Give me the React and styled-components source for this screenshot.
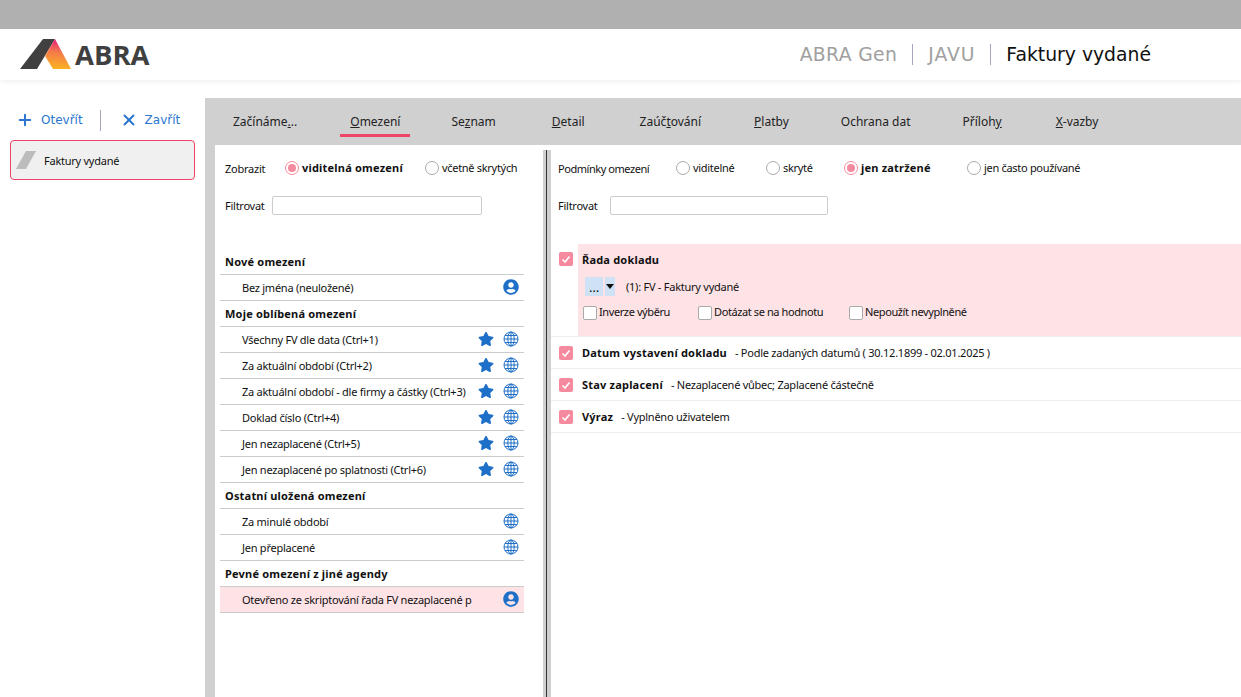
import React from "react";
import styled, { createGlobalStyle } from "styled-components";
import { FaStar, FaUserCircle } from "react-icons/fa";
import { FiPlus, FiX } from "react-icons/fi";

const Global = createGlobalStyle`
  html, body { margin: 0; padding: 0; background: #fff; }
  body { font-family: "Noto Sans", Tahoma, sans-serif; font-size: 11px; letter-spacing: -0.25px; color: #111; overflow: hidden; }
  * { box-sizing: border-box; }
  b { letter-spacing: 0.2px; }
`;

const Page = styled.div`
  width: 1241px;
  height: 697px;
  display: flex;
  flex-direction: column;
  overflow: hidden;
`;

const TopBar = styled.div`
  height: 29px;
  background: #b0b0b0;
`;

const Header = styled.header`
  height: 51px;
  display: flex;
  align-items: center;
  justify-content: space-between;
  padding: 0 90px 0 20px;
  box-shadow: 0 2px 4px rgba(0, 0, 0, 0.06);
`;

const Logo = styled.div`
  display: flex;
  align-items: center;
  gap: 3px;
`;

const LogoText = styled.span`
  font-family: "Open Sans", sans-serif;
  font-weight: 700;
  font-size: 27.5px;
  letter-spacing: 0;
  color: #404040;
`;

const Crumbs = styled.div`
  display: flex;
  align-items: center;
  font-family: "DejaVu Sans", sans-serif;
  font-size: 18.8px;
  letter-spacing: 0;
`;

const Crumb = styled.span`
  color: ${(p) => (p.$active ? "#111" : "#a0a0a0")};
  letter-spacing: ${(p) => p.$track ?? 0}px;
  padding: 0 ${(p) => (p.$active ? 0 : 15)}px 0 ${(p) => (p.$first ? 0 : 15)}px;
  line-height: 21px;
  border-left: ${(p) => (p.$first ? "none" : "1px solid #a5a5c0")};
`;

const Body = styled.div`
  flex: 1;
  display: flex;
  padding-top: 18px;
  min-height: 0;
`;

const Sidebar = styled.aside`
  width: 205px;
  padding: 0 10px;
`;

const SideActions = styled.div`
  height: 42px;
  display: flex;
  align-items: center;
  padding: 2px 0 0 6px;
  font-family: "DejaVu Sans", sans-serif;
  font-size: 12px;
  letter-spacing: 0;
  color: #2a75cf;
`;

const SideAction = styled.span`
  display: flex;
  align-items: center;
  gap: 7px;
  svg { font-size: 18px; stroke-width: 2.6; }
`;

const SideDivider = styled.span`
  width: 1px;
  height: 21px;
  background: #a5a5c0;
  margin: 0 19px 0 17px;
`;

const OpenCard = styled.div`
  width: 185px;
  height: 40px;
  background: #f0f0f0;
  border: 1px solid #ee4466;
  border-radius: 4px;
  display: flex;
  align-items: center;
  gap: 8px;
  padding-left: 5px;
`;

const Main = styled.main`
  flex: 1;
  display: flex;
  flex-direction: column;
  background: #d0d0d0;
  min-width: 0;
`;

const Tabs = styled.nav`
  height: 47px;
  display: flex;
  padding-left: 18px;
`;

const Tab = styled.span`
  height: 39px;
  display: flex;
  align-items: center;
  padding: 11px 10px 0;
  margin-left: ${(p) => p.$gap}px;
  font-size: 12px;
  letter-spacing: 0;
  color: #222;
  border-bottom: 3px solid ${(p) => (p.$active ? "#ee4466" : "transparent")};
  white-space: pre;
`;

const Panes = styled.div`
  flex: 1;
  display: flex;
  margin-left: 10px;
  background: #fff;
  min-height: 0;
`;

const LeftPane = styled.section`
  width: 328px;
  padding: 0 19px 0 5px;
`;

const Splitter = styled.div`
  width: 8px;
  margin-top: 5px;
  background: #d0d0d0;
  display: flex;
  justify-content: center;
  &::before {
    content: "";
    width: 1px;
    margin-left: -2px;
    background: #333;
  }
`;

const RightPane = styled.section`
  flex: 1;
  min-width: 0;
`;

const OptionRow = styled.div`
  height: 46px;
  display: flex;
  align-items: center;
  padding: 0 0 0 ${(p) => p.$pad}px;
`;

const FieldLabel = styled.span`
  width: ${(p) => p.$w}px;
  flex: none;
  letter-spacing: ${(p) => p.$track ?? -0.25}px;
`;

const RadioLabel = styled.label`
  display: flex;
  align-items: center;
  gap: 3px;
  width: ${(p) => p.$w}px;
  flex: none;
  font-weight: ${(p) => (p.$on ? 700 : 400)};
  letter-spacing: ${(p) => (p.$on ? 0.2 : -0.3)}px;
  white-space: nowrap;
`;

const RadioDot = styled.span`
  width: 14px;
  height: 14px;
  flex: none;
  border-radius: 50%;
  border: 1px solid ${(p) => (p.$on ? "#f58a9f" : "#aaa")};
  display: flex;
  align-items: center;
  justify-content: center;
  &::after {
    content: "";
    width: 8px;
    height: 8px;
    border-radius: 50%;
    background: ${(p) => (p.$on ? "#f58a9f" : "transparent")};
  }
`;

const RaisedText = styled.span`
  margin-bottom: 2px;
`;

const FilterRow = styled.div`
  height: 27px;
  margin-top: 1px;
  display: flex;
  align-items: center;
  padding-left: ${(p) => p.$pad}px;
`;

const FilterInput = styled.div`
  width: ${(p) => p.$w}px;
  height: 19px;
  border: 1px solid #ccc;
  border-radius: 2px;
`;

const List = styled.div`
  margin-top: 30px;
`;

const GroupTitle = styled.div`
  height: 26px;
  display: flex;
  align-items: center;
  padding-left: 5px;
  font-weight: 700;
  letter-spacing: 0.2px;
  border-bottom: 1px solid #ccc;
`;

const ListRow = styled.div`
  height: 26px;
  display: flex;
  align-items: center;
  padding: 0 5px 0 22px;
  border-bottom: 1px solid #ccc;
  background: ${(p) => (p.$hot ? "#fde2e6" : "transparent")};
`;

const RowText = styled.span`
  flex: 1;
  white-space: nowrap;
`;

const IconSlot = styled.span`
  width: 16px;
  height: 16px;
  margin: 0 0 2px 9px;
  display: flex;
  align-items: center;
  justify-content: center;
  color: #1e6fc8;
  font-size: 16px;
`;

const Conditions = styled.div`
  margin-top: 25px;
`;

const Condition = styled.div`
  display: flex;
  padding-left: 8px;
  border-bottom: 1px solid #eee;
  min-height: 32px;
  align-items: ${(p) => (p.$open ? "stretch" : "center")};
`;

const CheckBox = styled.span`
  width: 14px;
  height: 14px;
  flex: none;
  border-radius: 2px;
  background: #f58a9f;
  color: #fff;
  display: flex;
  align-items: center;
  justify-content: center;
  margin: ${(p) => (p.$open ? "8px 5px 0 0" : "0 9px 0 0")};
`;

const ConditionBody = styled.div`
  flex: 1;
  display: flex;
  align-items: center;
  white-space: pre;
`;

const OpenBody = styled.div`
  flex: 1;
  height: 92px;
  background: #fde2e6;
  padding: 8px 0 0 4px;
`;

const CondTitle = styled.b`
  font-weight: 700;
  margin-right: 8px;
`;

const PickerRow = styled.div`
  display: flex;
  align-items: center;
  margin: 10px 0 0 3px;
`;

const PickerBtn = styled.span`
  height: 19px;
  width: ${(p) => p.$w}px;
  background: #cfe2f5;
  margin-right: 2px;
  display: flex;
  align-items: center;
  justify-content: center;
  font-size: 13px;
`;

const PickerValue = styled.span`
  margin-left: 9px;
`;

const FlagRow = styled.div`
  display: flex;
  margin: 8px 0 0 1px;
`;

const Flag = styled.label`
  display: flex;
  align-items: center;
  gap: 2px;
  width: ${(p) => p.$w}px;
  letter-spacing: -0.4px;
`;

const FlagBox = styled.span`
  width: 14px;
  height: 14px;
  border: 1px solid #aaa;
  border-radius: 2px;
  background: #fff;
`;

const AbraMark = () => (
  <svg width="52" height="31" viewBox="0 0 52 31">
    <defs>
      <linearGradient id="abra" x1="0.6" y1="0" x2="0.5" y2="1">
        <stop offset="0" stopColor="#e6197f" />
        <stop offset="0.45" stopColor="#f47b4a" />
        <stop offset="1" stopColor="#fbb21f" />
      </linearGradient>
    </defs>
    <path d="M0 30L23 0H35L17 30Z" fill="#404040" />
    <path d="M35 0L51 30H33L25 17Z" fill="url(#abra)" />
  </svg>
);

const Globe = () => (
  <svg width="16" height="16" viewBox="0 0 16 16" fill="none" stroke="currentColor" strokeWidth="1">
    <circle cx="8" cy="8" r="7" />
    <ellipse cx="8" cy="8" rx="3.2" ry="7" />
    <path d="M8 1v14M1 8h14M2 4.5h12M2 11.5h12" />
  </svg>
);

const Tick = () => (
  <svg width="10" height="10" viewBox="0 0 10 10" fill="none" stroke="#fff" strokeWidth="1.6">
    <path d="M1.5 5.5L4 8L8.5 2.5" />
  </svg>
);

const tabs = [
  { label: <>Začínáme<u>.</u>..</>, gap: 0 },
  { label: <><u>O</u>mezení</>, gap: 33, active: true },
  { label: <>Se<u>z</u>nam</>, gap: 31 },
  { label: <><u>D</u>etail</>, gap: 36 },
  { label: <>Zaúč<u>t</u>ování</>, gap: 35 },
  { label: <><u>P</u>latby</>, gap: 33 },
  { label: "Ochrana dat", gap: 32 },
  { label: <>Příloh<u>y</u></>, gap: 32 },
  { label: <><u>X</u>-vazby</>, gap: 34 },
];

const groups = [
  { title: "Nové omezení", rows: [{ text: "Bez jména (neuložené)", user: true }] },
  {
    title: "Moje oblíbená omezení",
    rows: [
      "Všechny FV dle data (Ctrl+1)",
      "Za aktuální období (Ctrl+2)",
      "Za aktuální období - dle firmy a částky (Ctrl+3)",
      "Doklad číslo (Ctrl+4)",
      "Jen nezaplacené (Ctrl+5)",
      "Jen nezaplacené po splatnosti (Ctrl+6)",
    ].map((text) => ({ text, star: true, globe: true })),
  },
  {
    title: "Ostatní uložená omezení",
    rows: [
      { text: "Za minulé období", globe: true },
      { text: "Jen přeplacené", globe: true },
    ],
  },
  {
    title: "Pevné omezení z jiné agendy",
    rows: [{ text: "Otevřeno ze skriptování řada FV nezaplacené p", user: true, hot: true }],
  },
];

const conditions = [
  { title: "Datum vystavení dokladu", note: "- Podle zadaných datumů ( 30.12.1899 - 02.01.2025 )" },
  { title: "Stav zaplacení", note: "- Nezaplacené vůbec; Zaplacené částečně" },
  { title: "Výraz", note: "- Vyplněno uživatelem" },
];

const Radio = ({ on, w, children }) => (
  <RadioLabel $on={on} $w={w}>
    <RadioDot $on={on} />
    <RaisedText>{children}</RaisedText>
  </RadioLabel>
);

export default function App() {
  return (
    <Page>
      <Global />
      <TopBar />
      <Header>
        <Logo>
          <AbraMark />
          <LogoText>ABRA</LogoText>
        </Logo>
        <Crumbs>
          <Crumb $first $track={0.35}>ABRA Gen</Crumb>
          <Crumb $track={0.9}>JAVU</Crumb>
          <Crumb $active>Faktury vydané</Crumb>
        </Crumbs>
      </Header>
      <Body>
        <Sidebar>
          <SideActions>
            <SideAction><FiPlus />Otevřít</SideAction>
            <SideDivider />
            <SideAction><FiX />Zavřít</SideAction>
          </SideActions>
          <OpenCard>
            <svg width="20" height="18" viewBox="0 0 20 18">
              <path d="M0 18L10 0H20L10 18Z" fill="#bcbcbc" />
            </svg>
            Faktury vydané
          </OpenCard>
        </Sidebar>
        <Main>
          <Tabs>
            {tabs.map((t, i) => (
              <Tab key={i} $gap={t.gap} $active={t.active}>{t.label}</Tab>
            ))}
          </Tabs>
          <Panes>
            <LeftPane>
              <OptionRow $pad={5}>
                <FieldLabel $w={60}>Zobrazit</FieldLabel>
                <Radio on w={140}>viditelná omezení</Radio>
                <Radio>včetně skrytých</Radio>
              </OptionRow>
              <FilterRow $pad={5}>
                <FieldLabel $w={47}>Filtrovat</FieldLabel>
                <FilterInput $w={210} />
              </FilterRow>
              <List>
                {groups.map((g) => (
                  <React.Fragment key={g.title}>
                    <GroupTitle>{g.title}</GroupTitle>
                    {g.rows.map((r) => (
                      <ListRow key={r.text} $hot={r.hot}>
                        <RowText>{r.text}</RowText>
                        {r.star && <IconSlot><FaStar /></IconSlot>}
                        {r.globe && <IconSlot><Globe /></IconSlot>}
                        {r.user && <IconSlot><FaUserCircle /></IconSlot>}
                      </ListRow>
                    ))}
                  </React.Fragment>
                ))}
              </List>
            </LeftPane>
            <Splitter />
            <RightPane>
              <OptionRow $pad={7}>
                <FieldLabel $w={118} $track={-0.45}>Podmínky omezení</FieldLabel>
                <Radio w={90}>viditelné</Radio>
                <Radio w={78}>skryté</Radio>
                <Radio on w={123}>jen zatržené</Radio>
                <Radio>jen často používané</Radio>
              </OptionRow>
              <FilterRow $pad={7}>
                <FieldLabel $w={52}>Filtrovat</FieldLabel>
                <FilterInput $w={218} />
              </FilterRow>
              <Conditions>
                <Condition $open>
                  <CheckBox $open><Tick /></CheckBox>
                  <OpenBody>
                    <b>Řada dokladu</b>
                    <PickerRow>
                      <PickerBtn $w={18}>…</PickerBtn>
                      <PickerBtn $w={10}>
                        <svg width="8" height="5" viewBox="0 0 8 5"><path d="M0 0H8L4 5Z" fill="#111" /></svg>
                      </PickerBtn>
                      <PickerValue>(1): FV - Faktury vydané</PickerValue>
                    </PickerRow>
                    <FlagRow>
                      <Flag $w={115}><FlagBox /><RaisedText>Inverze výběru</RaisedText></Flag>
                      <Flag $w={151}><FlagBox /><RaisedText>Dotázat se na hodnotu</RaisedText></Flag>
                      <Flag><FlagBox /><RaisedText>Nepoužít nevyplněné</RaisedText></Flag>
                    </FlagRow>
                  </OpenBody>
                </Condition>
                {conditions.map((c) => (
                  <Condition key={c.title}>
                    <CheckBox><Tick /></CheckBox>
                    <ConditionBody>
                      <CondTitle>{c.title}</CondTitle>
                      {c.note}
                    </ConditionBody>
                  </Condition>
                ))}
              </Conditions>
            </RightPane>
          </Panes>
        </Main>
      </Body>
    </Page>
  );
}
